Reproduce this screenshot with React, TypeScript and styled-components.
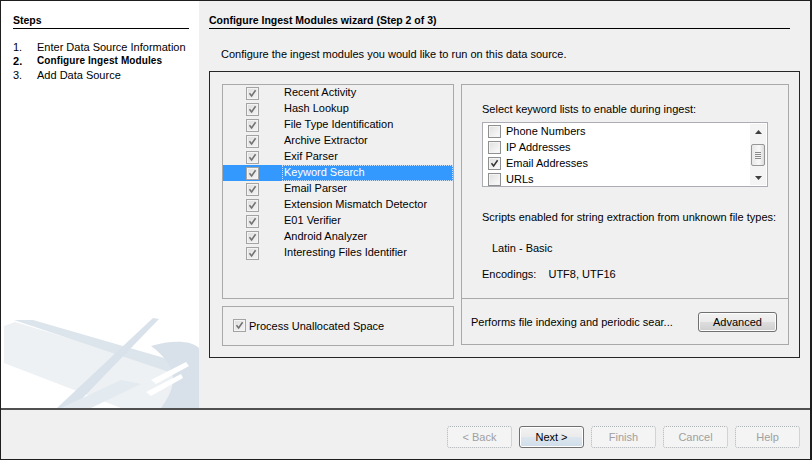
import React from 'react';
import styled, {createGlobalStyle, css} from 'styled-components';

const GlobalStyle = createGlobalStyle`
    html, body {
        margin: 0;
        padding: 0;
        background: #f0f0f0;
    }

    body {
        font-family: 'Liberation Sans', Arial, sans-serif;
        font-size: 11px;
        color: #000;
    }

    * {
        box-sizing: border-box;
    }
`;

const modules = [
    'Recent Activity',
    'Hash Lookup',
    'File Type Identification',
    'Archive Extractor',
    'Exif Parser',
    'Keyword Search',
    'Email Parser',
    'Extension Mismatch Detector',
    'E01 Verifier',
    'Android Analyzer',
    'Interesting Files Identifier'
];

const keywordLists = [
    {name: 'Phone Numbers', checked: false},
    {name: 'IP Addresses', checked: false},
    {name: 'Email Addresses', checked: true},
    {name: 'URLs', checked: false}
];

const steps = [
    {num: '1.', label: 'Enter Data Source Information', current: false},
    {num: '2.', label: 'Configure Ingest Modules', current: true},
    {num: '3.', label: 'Add Data Source', current: false}
];

const buttons = [
    {label: '< Back', kind: 'disabled'},
    {label: 'Next >', kind: 'default'},
    {label: 'Finish', kind: 'disabled'},
    {label: 'Cancel', kind: 'disabled'},
    {label: 'Help', kind: 'disabled'}
] as const;

const CheckBox = ({checked, faded}: {checked: boolean; faded?: boolean}) => (
    <Box faded={faded}>
        {checked && (
            <svg width='9' height='9' viewBox='0 0 9 9'>
                <path d='M1.5 4.2 L3.6 7 L7.6 1.2' fill='none' stroke={faded ? '#707070' : '#333'} strokeWidth='1.5' />
            </svg>
        )}
    </Box>
);

const Watermark = () => (
    <WatermarkSvg width='198' height='90' viewBox='0 0 198 90'>
        <polygon points='3,8 14,4 198,60 198,90 120,90 3,45' fill='#edf1f4' />
        <polygon points='13,2 32,2 198,50 198,64' fill='#dde5ec' />
        <polygon points='152,0 158,1 72,90 56,90' fill='#d9e2ea' />
        <path d='M150,28 C170,22 190,22 198,30 L198,90 L160,90 C175,70 180,50 150,28 Z' fill='#d8e1e9' />
        <polygon points='60,90 120,62 140,66 90,90' fill='#e3eaf0' />
        <polygon points='150,62 185,44 188,48 155,66' fill='#ffffff' />
        <polygon points='145,74 180,56 182,60 150,78' fill='#ffffff' />
    </WatermarkSvg>
);

export default function App() {
    return (
        <>
            <GlobalStyle />
            <Window>
                <Body>
                    <Sidebar>
                        <Heading>Steps</Heading>
                        <StepList>
                            {steps.map(step => (
                                <Step key={step.num} current={step.current}>
                                    <span className='num'>{step.num}</span>
                                    <span>{step.label}</span>
                                </Step>
                            ))}
                        </StepList>
                        <Watermark />
                    </Sidebar>

                    <Main>
                        <Heading>Configure Ingest Modules wizard (Step 2 of 3)</Heading>
                        <Description>Configure the ingest modules you would like to run on this data source.</Description>

                        <ModulesBox>
                            <LeftColumn>
                                <Panel grow>
                                    {modules.map(name => (
                                        <ModuleRow key={name} selected={name === 'Keyword Search'}>
                                            <div className='check'>
                                                <CheckBox checked faded />
                                            </div>
                                            <div className='name'>{name}</div>
                                        </ModuleRow>
                                    ))}
                                </Panel>
                                <Panel>
                                    <UnallocatedRow>
                                        <CheckBox checked faded />
                                        <span>Process Unallocated Space</span>
                                    </UnallocatedRow>
                                </Panel>
                            </LeftColumn>

                            <SettingsPanel>
                                <SettingsBody>
                                    <Label>Select keyword lists to enable during ingest:</Label>
                                    <KeywordList>
                                        <div className='rows'>
                                            {keywordLists.map(list => (
                                                <KeywordRow key={list.name}>
                                                    <CheckBox checked={list.checked} />
                                                    <span>{list.name}</span>
                                                </KeywordRow>
                                            ))}
                                        </div>
                                        <ScrollBar>
                                            <svg width='7' height='4' viewBox='0 0 7 4'>
                                                <path d='M0 4 L3.5 0 L7 4 Z' fill='#404040' />
                                            </svg>
                                            <Thumb>
                                                <span />
                                                <span />
                                                <span />
                                                <span />
                                            </Thumb>
                                            <svg width='7' height='4' viewBox='0 0 7 4'>
                                                <path d='M0 0 L3.5 4 L7 0 Z' fill='#404040' />
                                            </svg>
                                        </ScrollBar>
                                    </KeywordList>
                                    <Label top={23}>Scripts enabled for string extraction from unknown file types:</Label>
                                    <Label top={17} indent={10}>Latin - Basic</Label>
                                    <Label top={12}>
                                        Encodings:<Gap />UTF8, UTF16
                                    </Label>
                                </SettingsBody>
                                <SettingsFooter>
                                    <span>Performs file indexing and periodic sear...</span>
                                    <PushButton kind='normal' width={79} height={20}>Advanced</PushButton>
                                </SettingsFooter>
                            </SettingsPanel>
                        </ModulesBox>
                    </Main>
                </Body>

                <Footer>
                    {buttons.map(button => (
                        <PushButton key={button.label} kind={button.kind} width={65} height={22}>
                            {button.label}
                        </PushButton>
                    ))}
                </Footer>
            </Window>
        </>
    );
}

const Window = styled.div`
    width: 812px;
    height: 460px;
    border: 1px solid #1e1e1e;
    border-right-width: 2px;
    display: flex;
    flex-direction: column;
    background: #f0f0f0;
`;

const Body = styled.div`
    flex: 1;
    display: flex;
    min-height: 0;
`;

const Sidebar = styled.aside`
    width: 198px;
    background: #fff;
    display: flex;
    flex-direction: column;
    padding-left: 12px;
`;

const WatermarkSvg = styled.svg`
    margin-top: auto;
    margin-left: -12px;
    display: block;
`;

const Heading = styled.div`
    font-weight: bold;
    font-size: 10.5px;
    margin-top: 12px;
    margin-right: 10px;
    height: 16px;
    line-height: 14px;
    border-bottom: 1px solid #000;
`;

const StepList = styled.ol`
    list-style: none;
    margin: 11px 0 0;
    padding: 0;
`;

const Step = styled.li<{current: boolean}>`
    display: flex;
    height: 14px;
    line-height: 14px;
    ${({current}) => current && css`
        font-weight: bold;
        font-size: 10px;
        letter-spacing: 0.1px;
    `}

    .num {
        width: 24px;
        font-size: 11px;
    }
`;

const Main = styled.main`
    flex: 1;
    display: flex;
    flex-direction: column;
    padding: 0 10px 0 10px;
`;

const Description = styled.div`
    margin: 18px 0 0 12px;
    line-height: 14px;
`;

const ModulesBox = styled.section`
    margin-top: 10px;
    height: 287px;
    border: 1px solid #262626;
    display: grid;
    grid-template-columns: 232px 328px;
    gap: 7px;
    padding: 12px 0 11px 12px;
`;

const LeftColumn = styled.div`
    display: flex;
    flex-direction: column;
    gap: 7px;
`;

const Panel = styled.div<{grow?: boolean}>`
    border: 1px solid #a9a9a9;
    ${({grow}) => grow ? css`flex: 1;` : css`height: 40px;`}
`;

const ModuleRow = styled.div<{selected: boolean}>`
    display: flex;
    height: 16px;
    align-items: center;
    background: ${({selected}) => selected ? '#3399ff' : 'transparent'};
    color: ${({selected}) => selected ? '#fff' : '#000'};

    .check {
        width: 59px;
        display: flex;
        justify-content: center;
    }

    .name {
        flex: 1;
        height: 16px;
        line-height: 13px;
        padding-left: 1px;
        border: 1px dotted ${({selected}) => selected ? '#c8e0f8' : 'transparent'};
    }
`;

const Box = styled.span<{faded?: boolean}>`
    width: 13px;
    height: 13px;
    display: inline-flex;
    align-items: center;
    justify-content: center;
    flex: none;
    border: 1px solid ${({faded}) => faded ? '#a4a4a4' : '#8e8f8f'};
    background: ${({faded}) => faded
        ? 'linear-gradient(135deg, #dedede, #f4f4f4)'
        : 'linear-gradient(135deg, #e0e0e0, #fbfbfb)'};
    box-shadow: inset 0 0 0 1px #f4f4f4;
`;

const UnallocatedRow = styled.div`
    display: flex;
    align-items: center;
    gap: 3px;
    margin: 12px 0 0 10px;
`;

const SettingsPanel = styled.div`
    border: 1px solid #a9a9a9;
    display: flex;
    flex-direction: column;
    height: 261px;
`;

const SettingsBody = styled.div`
    flex: 1;
    padding: 17px 0 0 20px;
`;

const Label = styled.div<{top?: number; indent?: number}>`
    line-height: 14px;
    margin-top: ${({top}) => top ?? 0}px;
    padding-left: ${({indent}) => indent ?? 0}px;
`;

const Gap = styled.span`
    display: inline-block;
    width: 12px;
`;

const KeywordList = styled.div`
    margin-top: 6px;
    width: 286px;
    height: 65px;
    background: #fff;
    border: 1px solid #abadb3;
    display: flex;

    .rows {
        flex: 1;
    }
`;

const KeywordRow = styled.div`
    display: flex;
    align-items: center;
    height: 16px;
    padding-left: 5px;
    gap: 5px;
`;

const ScrollBar = styled.div`
    width: 16px;
    margin: 1px 1px 1px 0;
    background: #f4f4f4;
    display: flex;
    flex-direction: column;
    align-items: center;
    justify-content: space-between;
    padding: 6px 0 5px;
`;

const Thumb = styled.div`
    width: 14px;
    height: 22px;
    border: 1px solid #979797;
    border-radius: 2px;
    background: linear-gradient(90deg, #e8e8e8, #f8f8f8 60%, #dcdcdc);
    display: flex;
    flex-direction: column;
    align-items: center;
    justify-content: center;
    gap: 1px;

    span {
        width: 6px;
        height: 1px;
        background: #8b8b8b;
    }
`;

const SettingsFooter = styled.div`
    height: 46px;
    border-top: 1px solid #a9a9a9;
    display: flex;
    align-items: center;
    justify-content: space-between;
    padding: 0 11px 0 9px;
`;

type ButtonKind = 'disabled' | 'default' | 'normal';

const PushButton = styled.button<{kind: ButtonKind; width: number; height: number}>`
    width: ${({width}) => width}px;
    height: ${({height}) => height}px;
    font: inherit;
    padding: 0;
    border-radius: 3px;

    ${({kind}) => kind === 'disabled' && css`
        color: #a0a0a0;
        border: 1px dotted #adb2b5;
        background: #f4f4f4;
    `}

    ${({kind}) => kind === 'default' && css`
        color: #000;
        border: 1px solid #707070;
        background: linear-gradient(180deg, #f2f2f2 0%, #ebebeb 50%, #dde6ee 51%, #cfdde9 100%);
        box-shadow: inset 0 0 0 1px #fff;
    `}

    ${({kind}) => kind === 'normal' && css`
        color: #000;
        border: 1px solid #707070;
        background: linear-gradient(180deg, #f2f2f2 0%, #ebebeb 50%, #dddddd 51%, #cfcfcf 100%);
        box-shadow: inset 0 0 0 1px #fcfcfc;
    `}
`;

const Footer = styled.footer`
    height: 51px;
    border-top: 2px solid #505050;
    display: flex;
    justify-content: flex-end;
    gap: 7px;
    padding: 16px 10px 0 0;
`;
